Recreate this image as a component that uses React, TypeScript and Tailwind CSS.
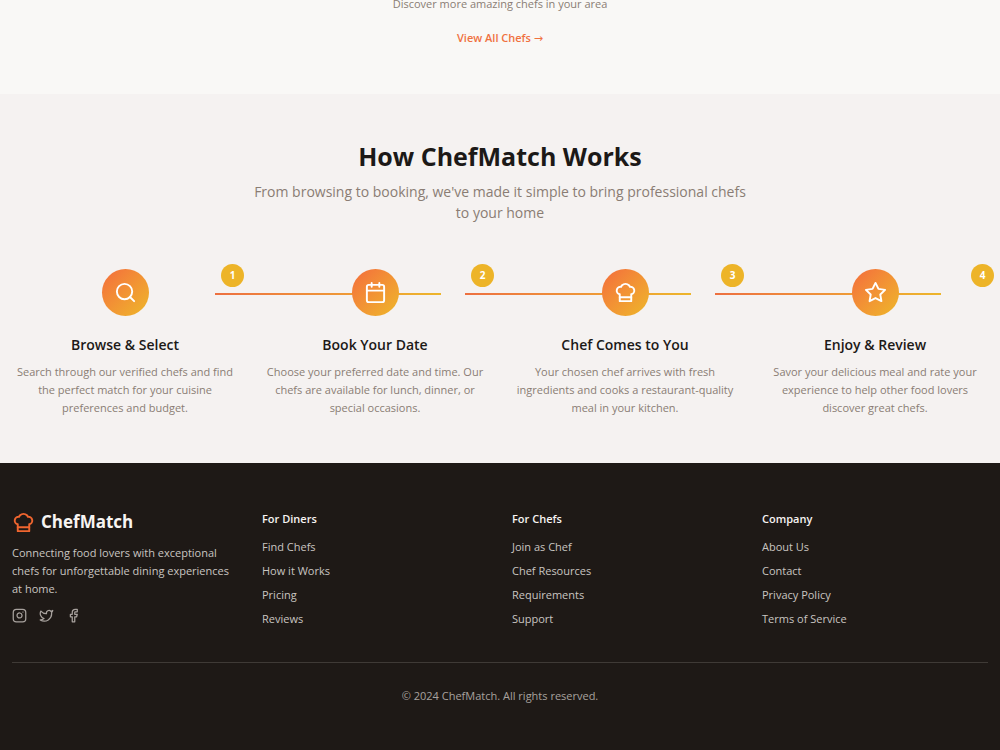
import type { ReactNode } from "react";
import { Calendar, Facebook, Instagram, Search, Twitter } from "lucide-react";

function ChefHat({ className }: { className: string }) {
  return (
    <svg
      viewBox="0 0 24 24"
      fill="none"
      stroke="currentColor"
      strokeWidth="2"
      strokeLinecap="round"
      strokeLinejoin="round"
      className={className}
      aria-hidden="true"
    >
      <path d="M6 13.87A4 4 0 0 1 7.41 6a5.11 5.11 0 0 1 1.05-1.54 5 5 0 0 1 7.08 0A5.11 5.11 0 0 1 16.59 6 4 4 0 0 1 18 13.87V21H6Z" />
      <path d="M6 17h12" />
    </svg>
  );
}

function StarIcon({ className }: { className: string }) {
  return (
    <svg
      viewBox="0 0 24 24"
      fill="none"
      stroke="currentColor"
      strokeWidth="2"
      strokeLinecap="round"
      strokeLinejoin="round"
      className={className}
      aria-hidden="true"
    >
      <polygon points="12 2 15.09 8.26 22 9.27 17 14.14 18.18 21.02 12 17.77 5.82 21.02 7 14.14 2 9.27 8.91 8.26 12 2" />
    </svg>
  );
}

const steps: { title: string; text: string; icon: ReactNode }[] = [
  {
    title: "Browse & Select",
    text: "Search through our verified chefs and find the perfect match for your cuisine preferences and budget.",
    icon: <Search className="size-[23px]" />,
  },
  {
    title: "Book Your Date",
    text: "Choose your preferred date and time. Our chefs are available for lunch, dinner, or special occasions.",
    icon: <Calendar className="size-[23px]" />,
  },
  {
    title: "Chef Comes to You",
    text: "Your chosen chef arrives with fresh ingredients and cooks a restaurant-quality meal in your kitchen.",
    icon: <ChefHat className="size-[23px]" />,
  },
  {
    title: "Enjoy & Review",
    text: "Savor your delicious meal and rate your experience to help other food lovers discover great chefs.",
    icon: <StarIcon className="size-[23px]" />,
  },
];

const linkGroups = [
  { title: "For Diners", links: ["Find Chefs", "How it Works", "Pricing", "Reviews"] },
  { title: "For Chefs", links: ["Join as Chef", "Chef Resources", "Requirements", "Support"] },
  { title: "Company", links: ["About Us", "Contact", "Privacy Policy", "Terms of Service"] },
];

const socials = [
  { name: "Instagram", icon: <Instagram className="size-[15px]" /> },
  { name: "Twitter", icon: <Twitter className="size-[15px]" /> },
  { name: "Facebook", icon: <Facebook className="size-[15px]" /> },
];

export default function App() {
  return (
    <div className="flex min-h-screen flex-col overflow-x-hidden bg-[#f9f8f6] font-['Open_Sans','Noto_Sans','DejaVu_Sans',sans-serif] text-[#1c1917]">
      <section className="-mt-[5px] flex flex-col items-center gap-4 pb-[46px] text-[11px] leading-[18px]">
        <p className="text-[#8a7d74]">Discover more amazing chefs in your area</p>
        <a href="#chefs" className="font-semibold text-[#f0713f]">
          View All Chefs <span className="font-['DejaVu_Sans',sans-serif] font-normal">→</span>
        </a>
      </section>

      <section className="bg-[#f5f2f1] px-3 py-[46px]">
        <div className="text-center">
          <h2 className="text-[25px] leading-8 font-bold">How ChefMatch Works</h2>
          <p className="mx-auto mt-[9px] max-w-[500px] text-[14px] leading-[21px] text-[#8a7d74]">
            From browsing to booking, we've made it simple to bring professional chefs to your home
          </p>
        </div>

        <ol className="mt-[46px] grid grid-cols-4 gap-6">
          {steps.map((step, index) => (
            <li key={step.title} className="relative text-center">
              {index < steps.length - 1 && (
                <div className="absolute top-6 left-[90%] h-[2px] w-full bg-linear-to-r from-[#ed7040] to-[#edb52b]" />
              )}
              <div className="relative z-10 mx-auto flex size-[47px] items-center justify-center rounded-full bg-linear-to-br from-[#f36b3b] to-[#edb728] text-white">
                {step.icon}
              </div>
              <span className="absolute -top-[5px] -right-1.5 z-20 flex size-[23px] items-center justify-center rounded-full bg-[#edb428] text-[10px] font-bold text-white">
                {index + 1}
              </span>
              <h3 className="mt-4 text-[14px] leading-[26px] font-semibold">{step.title}</h3>
              <p className="mt-[5px] text-[11px] leading-[18px] text-[#8a7d74]">{step.text}</p>
            </li>
          ))}
        </ol>
      </section>

      <footer className="grow bg-[#1e1916] px-3 pt-[47px] pb-[46px] text-[11px] text-[#c9c5c1]">
        <div className="grid grid-cols-4 gap-6">
          <div>
            <div className="flex items-center gap-1.5 text-[#f7f4f2]">
              <ChefHat className="size-[23px] text-[#f0652f]" />
              <span className="text-[17px] leading-6 font-bold">ChefMatch</span>
            </div>
            <p className="mt-[10px] leading-[18px]">
              Connecting food lovers with exceptional chefs for unforgettable dining experiences at home.
            </p>
            <div className="mt-[10px] flex gap-3 text-[#a8a29e]">
              {socials.map((social) => (
                <a key={social.name} href="#social" aria-label={social.name}>
                  {social.icon}
                </a>
              ))}
            </div>
          </div>
          {linkGroups.map((group) => (
            <div key={group.title}>
              <h4 className="leading-[18px] font-semibold text-[#f7f4f2]">{group.title}</h4>
              <ul className="mt-[10px] flex flex-col gap-1.5">
                {group.links.map((link) => (
                  <li key={link} className="leading-[18px]">
                    <a href="#footer">{link}</a>
                  </li>
                ))}
              </ul>
            </div>
          ))}
        </div>
        <div className="mt-[34px] border-t border-[#3f3a36] pt-6 text-center leading-[18px] text-[#a8a29e]">
          © 2024 ChefMatch. All rights reserved.
        </div>
      </footer>
    </div>
  );
}
